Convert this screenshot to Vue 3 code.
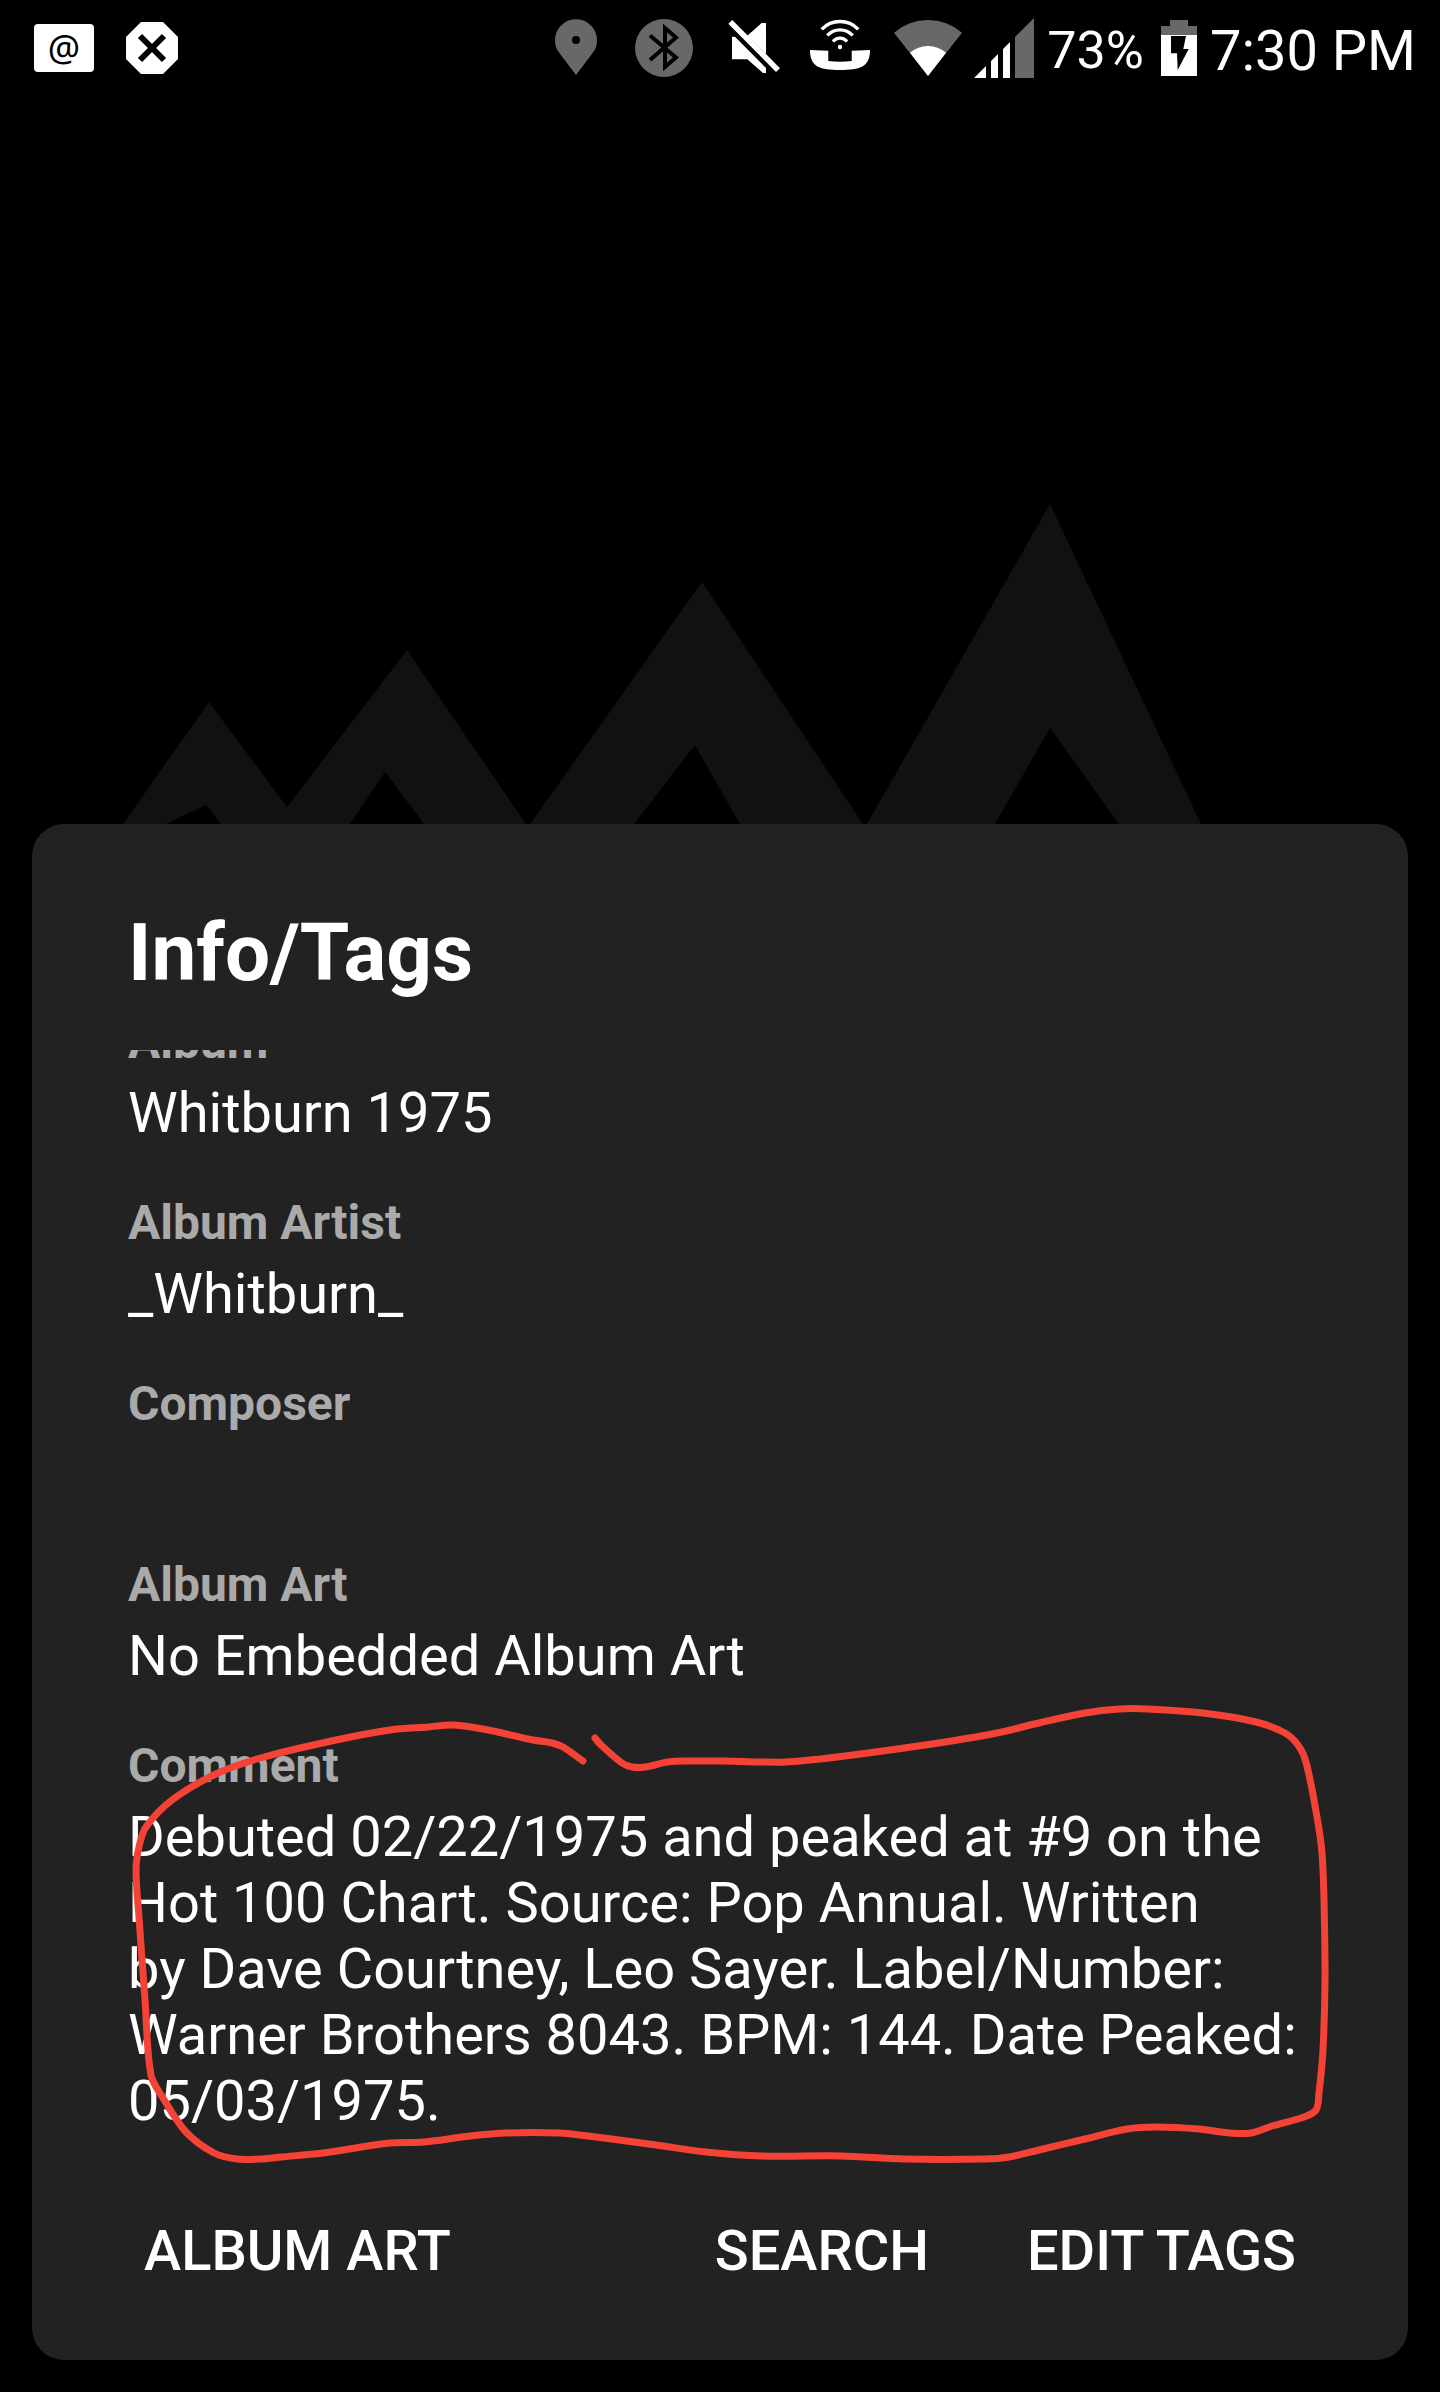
<script setup>
const fields = [
  { label: 'Album', value: 'Whitburn 1975' },
  { label: 'Album Artist', value: '_Whitburn_' },
  { label: 'Composer', value: '' },
  { label: 'Album Art', value: 'No Embedded Album Art' },
  {
    label: 'Comment',
    value:
      'Debuted 02/22/1975 and peaked at #9 on the Hot 100 Chart. Source: Pop Annual. Written by\u00a0Dave Courtney, Leo Sayer. Label/Number: Warner Brothers 8043. BPM: 144. Date Peaked: 05/03/1975.',
  },
]

// Sampled pen positions of the hand-drawn loop around the comment.
const penPoints = [
  [583, 1761], [563, 1747], [552, 1743], [533, 1740], [483, 1729], [453, 1725], [428, 1727],
  [390, 1730], [336, 1740], [264, 1757], [218, 1773], [172, 1800], [146, 1827], [139, 1847],
  [136, 1870], [139, 1917], [145, 2000], [151, 2075], [163, 2098], [186, 2132], [214, 2153],
  [237, 2159], [260, 2159], [281, 2157], [323, 2153], [390, 2143], [424, 2142], [470, 2136],
  [506, 2133], [559, 2133], [588, 2136], [656, 2145], [706, 2152], [761, 2156], [841, 2156],
  [904, 2159], [986, 2159], [1009, 2157], [1039, 2150], [1085, 2139], [1127, 2129], [1157, 2127],
  [1199, 2129], [1230, 2133], [1251, 2133], [1272, 2126], [1304, 2117], [1316, 2110], [1319, 2093],
  [1323, 2050], [1325, 1980], [1324, 1900], [1322, 1853], [1317, 1817], [1306, 1762], [1298, 1745],
  [1285, 1733], [1256, 1722], [1203, 1713], [1148, 1709], [1119, 1709], [1085, 1713], [1039, 1723],
  [992, 1734], [925, 1745], [837, 1757], [786, 1762], [761, 1762], [723, 1761], [693, 1761],
  [668, 1762], [645, 1767], [632, 1767], [622, 1763], [601, 1745], [595, 1738],
]

// Smooth curve through every point, with handles limited to the segment length.
function smooth(points) {
  let d = `M${points[0].join(' ')}`
  const dirAt = (i) => {
    const a = points[Math.max(i - 1, 0)]
    const b = points[Math.min(i + 1, points.length - 1)]
    const len = Math.hypot(b[0] - a[0], b[1] - a[1])
    return [(b[0] - a[0]) / len, (b[1] - a[1]) / len]
  }
  for (let i = 0; i < points.length - 1; i++) {
    const p = points[i]
    const q = points[i + 1]
    const h = Math.hypot(q[0] - p[0], q[1] - p[1]) / 3
    const u = dirAt(i)
    const v = dirAt(i + 1)
    d += ` C${(p[0] + u[0] * h).toFixed(1)} ${(p[1] + u[1] * h).toFixed(1)} ${(q[0] - v[0] * h).toFixed(1)} ${(q[1] - v[1] * h).toFixed(1)} ${q[0]} ${q[1]}`
  }
  return d
}
const penPath = smooth(penPoints)
</script>

<template>
  <div class="screen">
    <header class="status">
      <div class="notices">
        <span class="mail">@</span>
        <svg width="52" height="52" viewBox="0 0 52 52" aria-hidden="true">
          <path d="M15 0H37L52 15V37L37 52H15L0 37V15Z" fill="#fff" />
          <path d="M14 14L38 38M38 14L14 38" stroke="#000" stroke-width="6" />
        </svg>
      </div>

      <div class="system">
        <div class="radios">
          <svg width="68" height="64" viewBox="0 0 68 64" aria-hidden="true">
            <path d="M34 59L17 36.600A21 21 0 1 1 51 36.600Z" fill="#686868" />
            <circle cx="34" cy="24" r="4" fill="#000" />
          </svg>
          <svg width="68" height="64" viewBox="0 0 68 64" aria-hidden="true">
            <circle cx="34" cy="32" r="29" fill="#686868" />
            <path d="M20 19.500L46 41.500L35 51V12L46 21.500L20 44" fill="none" stroke="#000" stroke-width="4" />
          </svg>
          <svg width="68" height="64" viewBox="0 0 68 64" aria-hidden="true">
            <g fill="#fff">
              <path d="M10.300 7.700L14.300 4L62 52.300L58 56Z" />
              <path d="M29.300 19.700L43.700 7H48V38.300Z" />
              <path d="M14 20.700H17L48 52V57H45L29.300 43.300H14Z" />
            </g>
          </svg>
          <svg width="68" height="64" viewBox="0 0 68 64" aria-hidden="true">
            <g fill="none" stroke="#fff" stroke-width="3.300">
              <path d="M15.700 13.300A25.400 25.400 0 0 1 52.300 13.300" />
              <path d="M21.300 19.500A17 17 0 0 1 46.700 19.500" />
              <path d="M27 25.500A9 9 0 0 1 41 25.500" />
            </g>
            <circle cx="34" cy="31" r="2.200" fill="#fff" />
            <path d="M4 34L22.300 34.700V45Q34 46.500 45.700 45V34.700L64 34C64 51 54 54 34 54C14 54 4 51 4 34Z" fill="#fff" />
          </svg>
          <svg width="68" height="64" viewBox="0 0 68 64" aria-hidden="true">
            <path d="M34 60L0 16.700A52 52 0 0 1 68 16.700Z" fill="#686868" />
            <path d="M34 60L16 36.700A27.500 27.500 0 0 1 52 36.700Z" fill="#fff" />
          </svg>
        </div>
        <div class="power">
          <svg width="60" height="64" viewBox="0 0 60 64" aria-hidden="true">
            <path d="M0 62L12 50V62ZM17 62V45L24 38V62ZM29 62V33L36 26V62Z" fill="#fff" />
            <path d="M41 62V21L60 2V62Z" fill="#686868" />
          </svg>
          <span class="percent">73%</span>
          <svg width="40" height="64" viewBox="0 0 40 64" aria-hidden="true">
            <path d="M13 4H31V10H40V19H4V10H13Z" fill="#686868" />
            <path d="M4 19H40V60H4Z" fill="#fff" />
            <path d="M14 20H29L26.300 33H31.700L20.700 54L20 37.300H14Z" fill="#000" />
          </svg>
          <time class="clock" datetime="19:30">7:30 PM</time>
        </div>
      </div>
    </header>

    <div class="artwork">
      <svg class="peaks" viewBox="0 0 1440 320" aria-hidden="true">
        <path
          d="M123 320L209 198L287 303L407 146L526 320H424L385 268L350 320H221L206 301L166 320Z
             M530 320L702 78L863 320H740L695 241L634 320Z
             M867 320L1050 0L1201 320H1119L1050 224L995 320Z"
          fill="#111"
        />
      </svg>
    </div>

    <main class="sheet" role="dialog" aria-labelledby="sheet-title">
      <h1 id="sheet-title" class="title">Info/Tags</h1>
      <dl class="fields">
        <div v-for="field in fields" :key="field.label" class="field">
          <dt class="label">{{ field.label }}</dt>
          <dd class="value">{{ field.value }}</dd>
        </div>
      </dl>
      <div class="actions">
        <button type="button" class="action first">ALBUM ART</button>
        <button type="button" class="action">SEARCH</button>
        <button type="button" class="action">EDIT TAGS</button>
      </div>
      <svg class="pen" viewBox="32 1690 1376 480" aria-hidden="true">
        <path :d="penPath" fill="none" stroke="#f44336" stroke-width="7" stroke-linecap="round" stroke-linejoin="round" />
      </svg>
    </main>
  </div>
</template>

<style>
html,
body {
  margin: 0;
  background: #000;
}
</style>

<style scoped>
.screen {
  box-sizing: border-box;
  display: flex;
  flex-direction: column;
  min-height: 100vh;
  padding-bottom: 32px;
  background: #000;
  color: #fff;
  font-family: Roboto, "Liberation Sans", sans-serif;
}

svg {
  display: block;
  flex: none;
}

.status {
  display: flex;
  align-items: center;
  justify-content: space-between;
  height: 96px;
  padding: 0 24px 0 34px;
}

.notices {
  display: flex;
  align-items: center;
  gap: 32px;
}

.mail {
  width: 60px;
  border-radius: 4px;
  background: #fff;
  color: #000;
  font-family: "Noto Sans", sans-serif;
  font-size: 36px;
  line-height: 48px;
  text-align: center;
}

.system {
  display: flex;
  align-items: center;
  gap: 12px;
}

.radios {
  display: flex;
  gap: 20px;
}

.power {
  display: flex;
  align-items: center;
  gap: 13px;
}

.percent,
.clock {
  padding-top: 6px;
  line-height: 66px;
  white-space: nowrap;
}

.percent {
  font-size: 52px;
}

.clock {
  font-size: 56px;
}

.artwork {
  flex: 1;
  display: flex;
  align-items: flex-end;
}

.peaks {
  width: 100%;
}

.sheet {
  position: relative;
  display: flex;
  flex-direction: column;
  margin: 0 32px;
  padding: 82px 96px 56px;
  border-radius: 32px;
  background: #222;
}

.title {
  margin: 0 0 50px;
  font-size: 80px;
  font-weight: 700;
  line-height: 94px;
}

/* Scrolled to its end: the first field is cut by the top edge. */
.fields {
  display: flex;
  flex-direction: column;
  justify-content: flex-end;
  gap: 49px;
  max-height: 1084px;
  margin: 0 0 64px;
  overflow: hidden;
}

.field {
  flex: none;
}

.label {
  margin-bottom: 10px;
  color: #aaa;
  font-size: 48px;
  font-weight: 700;
  line-height: 56px;
}

.value {
  min-height: 66px;
  margin: 0;
  font-size: 56px;
  line-height: 66px;
}

.actions {
  display: flex;
  gap: 66px;
}

.action {
  padding: 20px 16px;
  border: 0;
  background: none;
  color: inherit;
  font-family: inherit;
  font-size: 56px;
  font-weight: 500;
  line-height: 66px;
  white-space: nowrap;
  cursor: pointer;
}

.first {
  margin-right: auto;
}

.pen {
  position: absolute;
  left: 0;
  bottom: 190px;
  width: 100%;
  pointer-events: none;
}
</style>
